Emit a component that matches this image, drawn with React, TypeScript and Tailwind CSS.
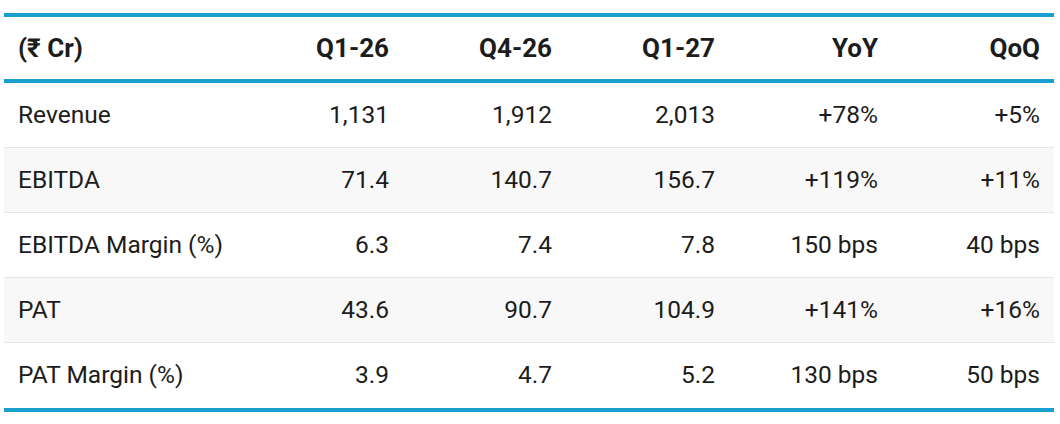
import React from 'react';

const cols = ['Q1-26', 'Q4-26', 'Q1-27', 'YoY', 'QoQ'];

const rows: { label: string; values: string[] }[] = [
    { label: 'Revenue', values: ['1,131', '1,912', '2,013', '+78%', '+5%'] },
    { label: 'EBITDA', values: ['71.4', '140.7', '156.7', '+119%', '+11%'] },
    { label: 'EBITDA Margin (%)', values: ['6.3', '7.4', '7.8', '150 bps', '40 bps'] },
    { label: 'PAT', values: ['43.6', '90.7', '104.9', '+141%', '+16%'] },
    { label: 'PAT Margin (%)', values: ['3.9', '4.7', '5.2', '130 bps', '50 bps'] },
];

// first column wide, five numeric columns of equal width
const grid = 'grid grid-cols-[236px_163px_163px_163px_163px_162px] items-center';

export default function App() {
    return (
        <div className="w-[1060px] h-[424px] bg-white pt-[13px] px-[4px] font-['Roboto',sans-serif] text-[#1c1c1c] text-[24.5px]">
            <div className="w-[1050px] border-t-4 border-b-4 border-[#1aa0d0]">
                {/* header */}
                <div className={`${grid} h-[66px] border-b-4 border-[#1aa0d0] font-bold text-[26px]`}>
                    <div className="px-[14px] text-left whitespace-nowrap">(₹ Cr)</div>
                    {cols.map((c) => (
                        <div key={c} className="px-[14px] text-right">{c}</div>
                    ))}
                </div>

                {rows.map((r, i) => (
                    <div
                        key={r.label}
                        className={`${grid} h-[65px] ${i < rows.length - 1 ? 'border-b border-[#e6e6e6]' : ''} ${i % 2 === 1 ? 'bg-[#f8f8f8]' : 'bg-white'}`}
                    >
                        <div className="px-[14px] text-left whitespace-nowrap">{r.label}</div>
                        {r.values.map((v, j) => (
                            <div key={j} className="px-[14px] text-right whitespace-nowrap">{v}</div>
                        ))}
                    </div>
                ))}
            </div>
        </div>
    );
}
